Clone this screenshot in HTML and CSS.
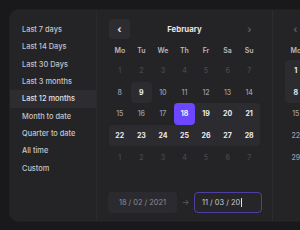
FILE: index.html
```html
<!DOCTYPE html>
<html>
<head>
<meta charset="utf-8">
<link rel="stylesheet" href="styles.css">
</head>
<body>
<div class="panel">
  <ul class="presets">
    <li>Last 7 days</li>
    <li>Last 14 Days</li>
    <li>Last 30 Days</li>
    <li>Last 3 months</li>
    <li class="active">Last 12 months</li>
    <li>Month to date</li>
    <li>Quarter to date</li>
    <li>All time</li>
    <li>Custom</li>
  </ul>
  <div class="month">
    <div class="head">
      <span class="nav btn">&lsaquo;</span>
      <span class="title">February</span>
      <span class="nav dim">&rsaquo;</span>
    </div>
    <div class="grid wk">
      <span>Mo</span><span>Tu</span><span>We</span><span>Th</span><span>Fr</span><span>Sa</span><span>Su</span>
    </div>
    <div class="grid days">
      <span class="off">1</span><span class="off">2</span><span class="off">3</span><span class="off">4</span><span class="off">5</span><span class="off">6</span><span class="off">7</span>
      <span>8</span><span class="today">9</span><span>10</span><span>11</span><span>12</span><span>13</span><span>14</span>
      <span>15</span><span>16</span><span>17</span><span class="sel">18</span><span class="in">19</span><span class="in">20</span><span class="in r-tr">21</span>
      <span class="in r-tl r-bl">22</span><span class="in">23</span><span class="in">24</span><span class="in">25</span><span class="in">26</span><span class="in">27</span><span class="in r-br">28</span>
      <span class="off">1</span><span class="off">2</span><span class="off">3</span><span class="off">4</span><span class="off">5</span><span class="off">6</span><span class="off">7</span>
    </div>
    <div class="inputs">
      <div class="field">18 / 02 / 2021</div>
      <span class="arrow">&rarr;</span>
      <div class="field focus">11 / 03 / 20<span class="caret"></span></div>
    </div>
  </div>
  <div class="month second">
    <div class="head">
      <span class="nav dim">&lsaquo;</span>
      <span class="title">March</span>
      <span class="nav dim">&rsaquo;</span>
    </div>
    <div class="grid wk">
      <span>Mo</span><span>Tu</span><span>We</span><span>Th</span><span>Fr</span><span>Sa</span><span>Su</span>
    </div>
    <div class="grid days">
      <span class="in r-tl">1</span><span class="in">2</span><span class="in">3</span><span class="in">4</span><span class="in">5</span><span class="in">6</span><span class="in r-tr">7</span>
      <span class="in r-bl">8</span><span class="in">9</span><span class="in">10</span><span class="sel">11</span><span>12</span><span>13</span><span>14</span>
      <span>15</span><span>16</span><span>17</span><span>18</span><span>19</span><span>20</span><span>21</span>
      <span>22</span><span>23</span><span>24</span><span>25</span><span>26</span><span>27</span><span>28</span>
      <span>29</span><span>30</span><span>31</span><span class="off">1</span><span class="off">2</span><span class="off">3</span><span class="off">4</span>
    </div>
  </div>
</div>
</body>
</html>
```
FILE: styles.css
```css
html, body {
  margin: 0;
  padding: 0;
  overflow: hidden;
  width: 300px;
  height: 230px;
  background: #19191c;
  font-family: Inter, "Noto Sans", sans-serif;
}
body {
  padding: 10px 0 0 10px;
  box-sizing: border-box;
}
.panel {
  display: flex;
  width: 460px;
  height: 211px;
  background: #242427;
  border-radius: 8px;
  box-shadow: 0 0 0 1px #202023;
}
.presets {
  list-style: none;
  margin: 0;
  padding: 11px 0 0 0;
  width: 87px;
  flex: none;
  border-right: 1px solid #2a2a2d;
  box-sizing: border-box;
}
.presets li {
  height: 17.35px;
  line-height: 17.35px;
  padding-left: 12px;
  font-size: 7.4px;
  font-weight: 500;
  color: #c4c4c8;
}
.presets li.active {
  background: #2d2d31;
  color: #e2e2e5;
}
.month {
  width: 175px;
  flex: none;
  box-sizing: border-box;
  padding: 9px 12px 0 12px;
}
.month.second {
  border-left: 1px solid #2c2c30;
}
.head {
  display: flex;
  align-items: center;
  justify-content: space-between;
  height: 20px;
}
.nav {
  width: 21px;
  height: 20px;
  display: flex;
  align-items: center;
  justify-content: center;
  font-size: 10px;
  font-weight: 700;
  color: #5a5a5f;
}
.nav.btn {
  background: #2d2d31;
  border-radius: 4px;
  color: #e6e6e8;
}
.title {
  font-size: 7.8px;
  font-weight: 700;
  color: #e4e4e6;
}
.grid {
  display: grid;
  grid-template-columns: repeat(7, 21.57px);
}
.wk {
  margin-top: 1px;
  height: 20px;
  align-items: center;
}
.wk span {
  text-align: center;
  font-size: 7px;
  font-weight: 600;
  color: #b9b9bd;
}
.days {
  grid-auto-rows: 21.6px;
}
.days span {
  display: flex;
  align-items: center;
  justify-content: center;
  font-size: 7px;
  font-weight: 500;
  color: #9d9da2;
}
.days span.off {
  color: #48484d;
}
.days span.today {
  background: #2c2c30;
  border-radius: 4px;
  color: #f2f2f4;
  font-weight: 700;
}
.days span.in {
  background: #2c2c30;
  color: #ececee;
  font-weight: 700;
}
.days span.sel {
  background: #6c47ff;
  border-radius: 4px;
  color: #f4f2ff;
  font-weight: 700;
}
.days span.r-tl { border-top-left-radius: 4px; }
.days span.r-tr { border-top-right-radius: 4px; }
.days span.r-bl { border-bottom-left-radius: 4px; }
.days span.r-br { border-bottom-right-radius: 4px; }
.inputs {
  display: flex;
  align-items: center;
  margin-top: 24px;
  margin-left: -1px;
  width: 154px;
}
.field {
  width: 69px;
  height: 21px;
  box-sizing: border-box;
  background: #2b2b2f;
  border-radius: 4px;
  display: flex;
  align-items: center;
  justify-content: center;
  font-size: 7.4px;
  color: #8c8c91;
}
.field.focus {
  width: 68px;
  background: #262629;
  border: 1px solid #4e3fa3;
  justify-content: flex-start;
  padding-left: 7px;
  color: #c9c9cd;
}
.caret {
  display: inline-block;
  width: 1px;
  height: 9px;
  background: #e0e0e3;
  margin-left: 1px;
}
.arrow {
  width: 17px;
  text-align: center;
  font-size: 8px;
  color: #5e5e63;
}
```
